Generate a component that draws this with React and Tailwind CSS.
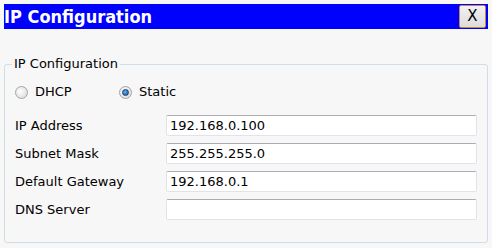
const font = { fontFamily: '"DejaVu Sans", Verdana, sans-serif' };
const titleFont = { fontFamily: '"DejaVu Sans Condensed", "DejaVu Sans", Tahoma, sans-serif', fontStretch: 'condensed' };

function Radio({ checked, label }) {
  return (
    <label className="flex items-center gap-[7px]">
      <span className="flex h-[13px] w-[13px] items-center justify-center rounded-full border border-[#a5a5a5] bg-[radial-gradient(circle_at_40%_40%,#ffffff,#d4d4d4)]">
        {checked && (
          <span className="h-[7px] w-[7px] rounded-full border border-[#1d3c6a] bg-[radial-gradient(circle_at_40%_40%,#5db7f0,#0f4e9c)]" />
        )}
      </span>
      <span>{label}</span>
    </label>
  );
}

function Field({ label, value }) {
  return (
    <div className="flex h-[21px] items-center">
      <span className="w-[151px] shrink-0">{label}</span>
      <div className="flex h-[21px] w-[311px] items-center rounded-[2px] border border-[#e2e3ea] border-t-[#abadb3] bg-white pl-[3px]">
        {value}
      </div>
    </div>
  );
}

export default function App() {
  return (
    <div className="h-[248px] w-[492px] bg-[#f7f7f7] p-[4px] text-[13px] text-black" style={font}>
      <div className="flex h-[25px] items-center justify-between bg-[#0000ff] pr-[2px]">
        <span className="text-[18px] font-bold leading-none text-white" style={titleFont}>IP Configuration</span>
        <button className="flex h-[23px] w-[27px] items-center justify-center rounded-[2px] border border-[#c8874a] bg-gradient-to-b from-[#f2f2f2] to-[#dcdcdc] text-[15px] text-black">
          X
        </button>
      </div>
      <fieldset className="mt-[27px] h-[187px] w-[484px] rounded-[3px] border border-[#d0dde6] px-[10px]">
        <legend className="ml-[-3px] px-[2px] leading-[16px]">IP Configuration</legend>
        <div className="mt-[12px] flex h-[16px] items-center">
          <div className="w-[104px]"><Radio label="DHCP" /></div>
          <Radio checked label="Static" />
        </div>
        <div className="mt-[15px] flex flex-col gap-[7px]">
          <Field label="IP Address" value="192.168.0.100" />
          <Field label="Subnet Mask" value="255.255.255.0" />
          <Field label="Default Gateway" value="192.168.0.1" />
          <Field label="DNS Server" value="" />
        </div>
      </fieldset>
    </div>
  );
}
